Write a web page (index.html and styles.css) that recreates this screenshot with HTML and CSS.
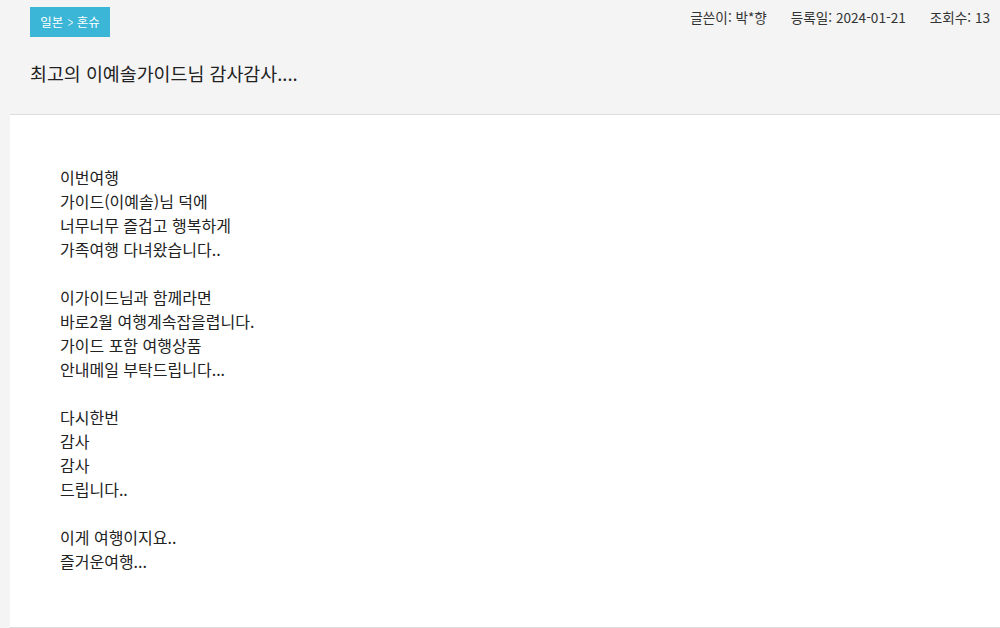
FILE: index.html
```html
<!DOCTYPE html>
<html lang="ko">
	<head>
		<meta charset="utf-8">
		<title>최고의 이예솔가이드님 감사감사....</title>
		<link rel="stylesheet" href="styles.css">
	</head>
	<body>
		<div class="view">
			<header class="view-head">
				<div class="head-top">
					<span class="badge">일본<span class="sep">&gt;</span>혼슈</span>
					<ul class="meta">
						<li>글쓴이: 박*향</li>
						<li>등록일: 2024-01-21</li>
						<li>조회수: 13</li>
					</ul>
				</div>
				<h1 class="title">최고의 이예솔가이드님 감사감사....</h1>
			</header>
			<div class="view-body">
				<p>이번여행<br>가이드(이예솔)님 덕에<br>너무너무 즐겁고 행복하게<br>가족여행 다녀왔습니다..</p>
				<p>이가이드님과 함께라면<br>바로2월 여행계속잡을렵니다.<br>가이드 포함 여행상품<br>안내메일 부탁드립니다...</p>
				<p>다시한번<br>감사<br>감사<br>드립니다..</p>
				<p>이게 여행이지요..<br>즐거운여행...</p>
			</div>
		</div>
	</body>
</html>
```

FILE: styles.css
```css
* {
	box-sizing: border-box;
}
html,
body {
	margin: 0;
	padding: 0;
	background: #f4f4f4;
	color: #333;
	font-family: "Noto Sans CJK KR", "Noto Sans", sans-serif;
}
.view-head {
	padding: 7px 10px 28px 30px;
}
.head-top {
	display: flex;
	justify-content: space-between;
	align-items: flex-start;
}
.badge {
	display: inline-block;
	background: #3bb6d6;
	color: #fff;
	font-size: 12.5px;
	line-height: 30px;
	height: 30px;
	width: 80px;
	text-align: center;
	white-space: nowrap;
}
.badge .sep {
	display: inline-block;
	margin: 0 3px 0 4px;
	transform: scale(0.8, 1.35);
	font-weight: 300;
}
.meta {
	display: flex;
	gap: 24px;
	list-style: none;
	margin: 0;
	padding: 0;
	font-size: 13.6px;
	line-height: 20px;
	color: #333;
}
.title {
	margin: 23px 0 0;
	font-size: 18.4px;
	font-weight: normal;
	line-height: 26px;
	color: #222;
}
.view-body {
	margin-left: 10px;
	background: #fff;
	border-top: 1px solid #ddd;
	border-bottom: 1px solid #ddd;
	padding: 50px 50px 30px;
	font-size: 16px;
	line-height: 24px;
	color: #222;
}
.view-body p {
	margin: 0 0 24px;
}
```
